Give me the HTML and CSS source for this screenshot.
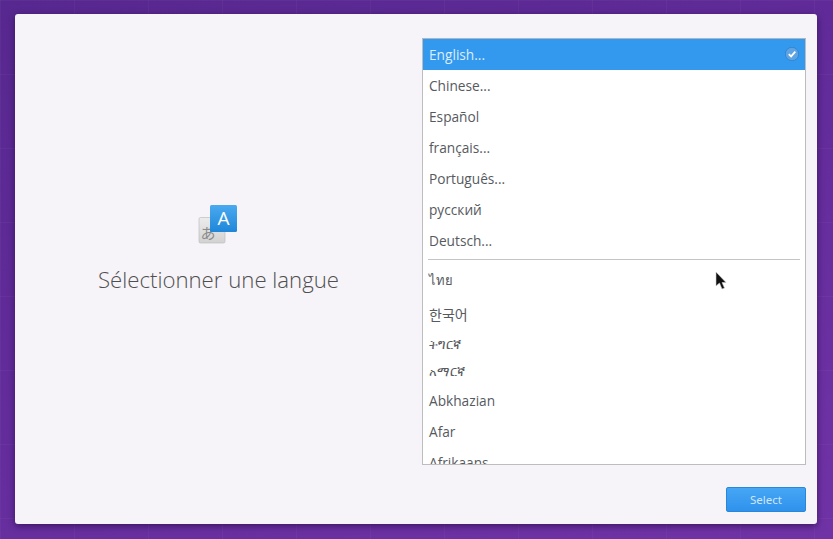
FILE: index.html
```html
<!DOCTYPE html>
<html lang="fr">
<head>
<meta charset="utf-8">
<title>Sélectionner une langue</title>
<link rel="stylesheet" href="styles.css">
</head>
<body>
<main class="card">
  <div class="content">
    <section class="intro">
      <svg class="lang-icon" width="40" height="40" viewBox="0 0 40 40" aria-hidden="true">
        <defs>
          <linearGradient id="g" x1="0" y1="0" x2="0" y2="1"><stop offset="0" stop-color="#4aaaf0"/><stop offset="1" stop-color="#1f86d8"/></linearGradient>
          <linearGradient id="h" x1="0" y1="0" x2="0" y2="1"><stop offset="0" stop-color="#ececec"/><stop offset="1" stop-color="#d2d2d2"/></linearGradient>
        </defs>
        <rect x="1" y="13.500" width="26" height="25.500" rx="1.500" fill="url(#h)" stroke="#bdbdbd" stroke-width=".7"/>
        <text x="10" y="35" class="lang-kana">あ</text>
        <rect x="12" y="1" width="27" height="27" rx="1.500" fill="url(#g)"/>
        <text x="25.500" y="21" class="lang-a">A</text>
      </svg>
      <h1 class="title">Sélectionner une langue</h1>
    </section>
    <section class="list-wrap">
      <ul class="list">
        <li class="row selected">English...
          <svg class="check" width="14" height="14" viewBox="0 0 14 14" aria-hidden="true"><circle cx="7" cy="7" r="6.700" fill="#5ea3e4" stroke="#2c7cc6" stroke-width=".7"/><path d="M3.800 7.200l2.300 2.200 4.200-4.700" fill="none" stroke="#fff" stroke-width="1.800"/></svg>
        </li>
        <li class="row">Chinese...</li>
        <li class="row">Español</li>
        <li class="row">français...</li>
        <li class="row">Português...</li>
        <li class="row">русский</li>
        <li class="row">Deutsch...</li>
        <li class="divider"></li>
        <li class="row thai">ไทย</li>
        <li class="row korean">한국어</li>
        <li class="row ethiopic">ትግርኛ</li>
        <li class="row ethiopic">አማርኛ</li>
        <li class="row">Abkhazian</li>
        <li class="row">Afar</li>
        <li class="row">Afrikaans</li>
      </ul>
    </section>
  </div>
  <footer class="actions">
    <button class="select" type="button">Select</button>
  </footer>
</main>
<svg class="cursor" width="14" height="20" viewBox="0 0 14 20" aria-hidden="true"><path d="M1 1v14l3.500-3 2.500 6 2.500-1-2.500-5.500H11z" fill="#111" stroke="#ccc" stroke-width=".6"/></svg>
</body>
</html>
```
FILE: styles.css
```css
* { box-sizing: border-box; }
html, body { height: 100%; }
body {
  margin: 0;
  padding: 14px 16px 15px 15px;
  position: relative;
  overflow: hidden;
  font-family: "Open Sans", "Noto Sans", "DejaVu Sans", sans-serif;
  background-color: #652e9c;
  background-image:
    linear-gradient(rgba(255,255,255,.03) 1px, transparent 1px),
    linear-gradient(90deg, rgba(255,255,255,.03) 1px, transparent 1px),
    linear-gradient(160deg, #57288f 0%, #632c9b 50%, #7033a6 100%);
  background-size: 74px 74px, 74px 74px, 100% 100%;
}
.card {
  height: 100%;
  display: flex;
  flex-direction: column;
  background: #f6f4f8;
  border-radius: 3px;
  box-shadow: 0 2px 7px rgba(30, 5, 60, .6);
  padding: 24px 11px 11px 0;
}
.content {
  display: flex;
  height: 427px;
}
.intro {
  width: 407px;
  display: flex;
  flex-direction: column;
  align-items: center;
  padding-top: 166px;
}
.lang-icon { display: block; margin-right: 1px; }
.lang-a { font: 400 19px "Open Sans", sans-serif; fill: #fff; text-anchor: middle; }
.lang-kana { font: 400 15px "Noto Sans CJK JP", sans-serif; fill: #8a8a8a; text-anchor: middle; }
.title {
  margin: 19px 0 0;
  font-size: 22.2px;
  font-weight: 300;
  line-height: 34px;
  color: #4f4f4f;
}
.list-wrap {
  width: 384px;
  height: 427px;
  background: #fff;
  border: 1px solid #bdbdbd;
  border-top-color: #a9b5c0;
  overflow: hidden;
}
.list { list-style: none; margin: 0; padding: 0; }
.row {
  height: 31px;
  line-height: 31px;
  padding-left: 6px;
  font-size: 13.7px;
  color: #565a5e;
  position: relative;
}
.selected { background: #3399ee; color: #dcecfb; }
.check { position: absolute; right: 6px; top: 8px; }
.divider { height: 1px; margin: 3px 5px 1px; background: #c4c4c4; }
.thai { height: 39px; line-height: 39px; font-family: "Noto Sans", "DejaVu Sans", sans-serif; font-size: 13px; }
.korean { height: 31px; line-height: 28px; font-family: "Noto Sans CJK KR", sans-serif; font-size: 14px; }
.ethiopic { height: 27px; line-height: 27px; font-family: "DejaVu Sans", "Noto Sans", sans-serif; font-size: 13px; }
.actions {
  display: flex;
  justify-content: flex-end;
  margin-top: 22px;
}
.select {
  width: 80px;
  height: 25px;
  padding: 0;
  border: 1px solid #2a86d8;
  border-radius: 2px;
  background: linear-gradient(#46a6f5, #2f92ec);
  color: #cfe6fb;
  font-family: "Noto Sans", sans-serif;
  font-size: 11.5px;
}
.cursor { position: absolute; left: 715px; top: 271px; }
```
